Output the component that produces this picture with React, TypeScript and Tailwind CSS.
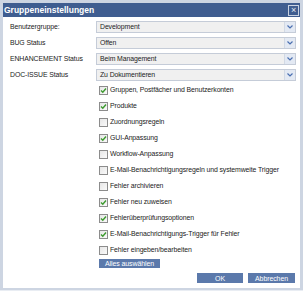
import React from "react";

const selects = [
  { label: "Benutzergruppe:", value: "Development" },
  { label: "BUG Status", value: "Offen" },
  { label: "ENHANCEMENT Status", value: "Beim Management" },
  { label: "DOC-ISSUE Status", value: "Zu Dokumentieren" },
];

const perms = [
  { label: "Gruppen, Postfächer und Benutzerkonten", checked: true },
  { label: "Produkte", checked: true },
  { label: "Zuordnungsregeln", checked: false },
  { label: "GUI-Anpassung", checked: true },
  { label: "Workflow-Anpassung", checked: false },
  { label: "E-Mail-Benachrichtigungsregeln und systemweite Trigger", checked: false },
  { label: "Fehler archivieren", checked: false },
  { label: "Fehler neu zuweisen", checked: true },
  { label: "Fehlerüberprüfungsoptionen", checked: true },
  { label: "E-Mail-Benachrichtigungs-Trigger für Fehler", checked: true },
  { label: "Fehler eingeben/bearbeiten", checked: false },
];

function Checkbox({ checked }: { checked: boolean }) {
  return (
    <span className="flex h-[9px] w-[9px] shrink-0 items-center justify-center border border-[#8c8c8c] bg-gradient-to-br from-[#e6e6e6] to-[#fafafa]">
      {checked && (
        <svg width="7" height="7" viewBox="0 0 7 7" aria-hidden>
          <path d="M1 3.5 L2.8 5.3 L6 1.5" fill="none" stroke="#3c9a2e" strokeWidth="1.4" />
        </svg>
      )}
    </span>
  );
}

export default function App() {
  return (
    <div
      className="h-[291px] w-[303px] bg-[#e9edf3] text-[6.9px] tracking-[-0.1px] text-[#222]"
      style={{ fontFamily: '"Liberation Sans", Arial, sans-serif' }}
    >
      <div className="flex h-[290px] flex-col border-x-[3px] border-t-[3px] border-b-[2px] border-[#cdd5e2] bg-white">
        <div className="flex h-[14px] items-center justify-between bg-[#3f5d90] pl-[1px] pr-[1px]">
          <span className="text-[8.5px] font-bold tracking-normal text-white">Gruppeneinstellungen</span>
          <span className="flex h-[11px] w-[11px] items-center justify-center border border-[#c9d2e2] text-[9px] leading-none text-[#e6ebf3]">
            ×
          </span>
        </div>

        <div className="flex flex-col gap-[4px] pl-[7px] pr-[4px] pt-[4px]">
          {selects.map((s) => (
            <div key={s.label} className="flex h-[12px] items-center">
              <span className="w-[86px] shrink-0 whitespace-nowrap">{s.label}</span>
              <div className="flex h-[12px] flex-1 items-center border border-[#c5ccd8] bg-[#f0f0f0]">
                <span className="flex-1 whitespace-nowrap pl-[3px]">{s.value}</span>
                <span className="flex h-full w-[11px] items-center justify-center border-l border-[#d2d9e4] bg-[#e3e9f3]">
                  <svg width="6" height="4" viewBox="0 0 6 4" aria-hidden>
                    <path d="M0.5 0.5 L3 3 L5.5 0.5" fill="none" stroke="#4a6fb0" strokeWidth="1.2" />
                  </svg>
                </span>
              </div>
            </div>
          ))}
        </div>

        <div className="mt-[1px] flex flex-col pl-[96px]">
          {perms.map((p) => (
            <div key={p.label} className="flex h-[16px] items-center gap-[2px]">
              <Checkbox checked={p.checked} />
              <span className="whitespace-nowrap">{p.label}</span>
            </div>
          ))}
          <div className="mt-[1px]">
            <button className="h-[9px] w-[61px] bg-[#5b79ab] text-[7px] leading-none text-white">
              Alles auswählen
            </button>
          </div>
        </div>

        <div className="mt-[4px] flex justify-end gap-[5px] pr-[5px]">
          <button className="h-[10px] w-[46px] bg-[#5b79ab] text-[7px] leading-none text-white">OK</button>
          <button className="h-[10px] w-[47px] bg-[#5b79ab] text-[7px] leading-none text-white">Abbrechen</button>
        </div>
      </div>
    </div>
  );
}
